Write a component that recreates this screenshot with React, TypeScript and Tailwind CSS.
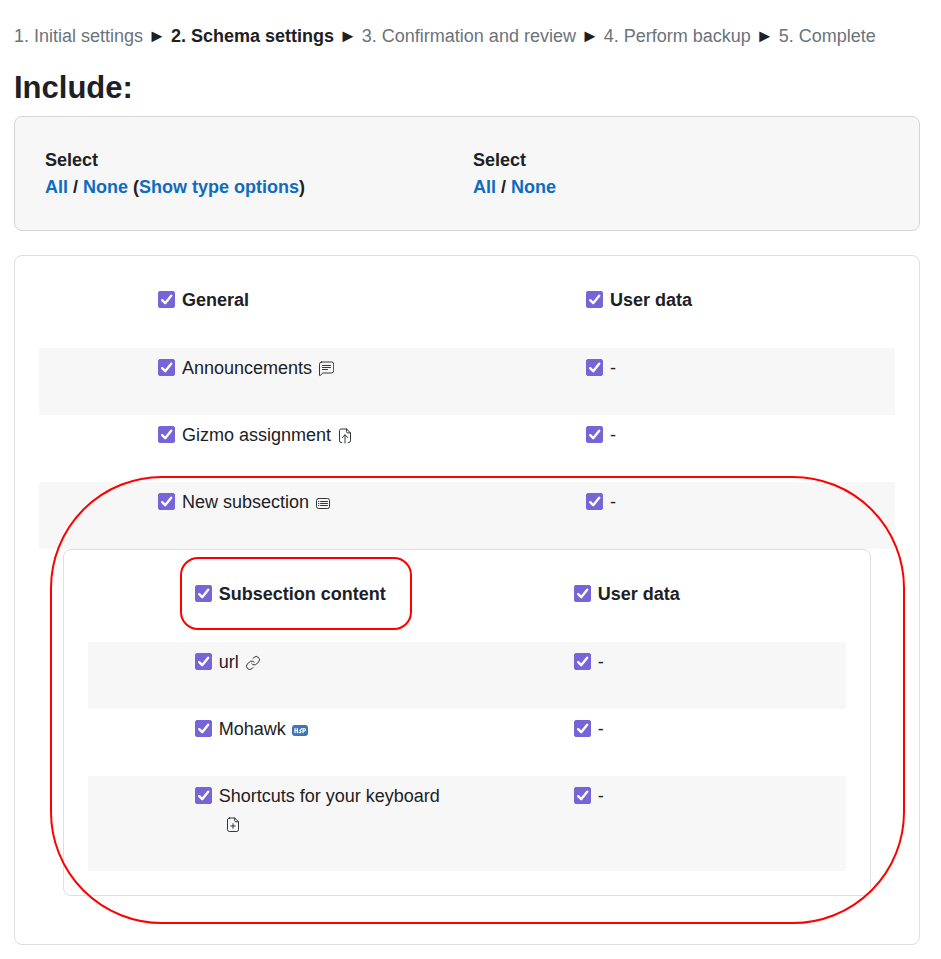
import { Fragment, type ReactNode } from 'react';

type IconName = 'forum' | 'assign' | 'subsection' | 'url' | 'h5p' | 'page';

type Activity = { id: string; name: string; icon: IconName };

const steps = [
  '1. Initial settings',
  '2. Schema settings',
  '3. Confirmation and review',
  '4. Perform backup',
  '5. Complete',
];
const currentStep = 1;

const generalActivities: Activity[] = [
  { id: 'announcements', name: 'Announcements', icon: 'forum' },
  { id: 'gizmo', name: 'Gizmo assignment', icon: 'assign' },
];

const subsectionActivities: Activity[] = [
  { id: 'url', name: 'url', icon: 'url' },
  { id: 'mohawk', name: 'Mohawk', icon: 'h5p' },
  { id: 'shortcuts', name: 'Shortcuts for your keyboard', icon: 'page' },
];

const iconShapes: Record<IconName, ReactNode> = {
  forum: (
    <>
      <path d="M3.700 1h9.800A2.200 2.200 0 0 1 15.700 3.200v6.600a2.200 2.200 0 0 1-2.200 2.200H4.800L2.200 14.600a.4.4 0 0 1-.7-.3V3.200A2.200 2.200 0 0 1 3.700 1Z" />
      <path d="M4.500 4.500h8M4.500 6.500h8M4.500 8.500h5" />
    </>
  ),
  assign: (
    <>
      <path d="M4.800 14.500H4.200A1.700 1.700 0 0 1 2.500 12.800V2.700A1.700 1.700 0 0 1 4.200 1h5.400l3.900 3.900v7.900a1.700 1.700 0 0 1-1.700 1.700h-.6" />
      <path d="M9.600 1v2.700a1.200 1.200 0 0 0 1.200 1.200h2.700M8 15V7M5.300 9.500 8 6.800l2.700 2.700" />
    </>
  ),
  subsection: (
    <>
      <rect x="1.500" y="3.500" width="13" height="10" rx="2" />
      <path d="M5.500 6.500h7M5.500 8.500h7M5.500 10.500h7M3.500 6.500h.4M3.500 8.500h.4M3.500 10.500h.4" />
    </>
  ),
  url: (
    <g transform="translate(.2 .2) scale(.65)" strokeWidth="1.400">
      <path d="M10 13a5 5 0 0 0 7.540.54l3-3a5 5 0 0 0-7.070-7.070l-1.720 1.710" />
      <path d="M14 11a5 5 0 0 0-7.540-.54l-3 3a5 5 0 0 0 7.070 7.070l1.710-1.710" />
    </g>
  ),
  h5p: (
    <>
      <rect x="0" y="3" width="16" height="11" rx="3" fill="#3a75b8" stroke="none" />
      <path
        d="M3 6.400v4.300M5.300 6.400v4.300M3 8.500h2.300M11 10.700V6.500h1.300a1.200 1.200 0 0 1 0 2.400H11M9.600 6.600 8 8.300M7 10a1 1 0 1 0 1.500-1.100"
        stroke="#fff"
        strokeWidth="1.200"
      />
    </>
  ),
  page: (
    <>
      <path d="M4.500 1h5.200l3.800 3.800v7.700a2 2 0 0 1-2 2h-7a2 2 0 0 1-2-2V3a2 2 0 0 1 2-2Z" />
      <path d="M9.700 1v2.600a1.200 1.200 0 0 0 1.200 1.200h2.600M8 6.700v4.600M5.700 9h4.600" />
    </>
  ),
};

function ActivityIcon({ name }: { name: IconName }) {
  return (
    <span className="inline-block pl-1.5 align-middle">
      <svg
        viewBox="0 0 16 16"
        className="block size-4 fill-none stroke-[#1d2125]"
        strokeWidth="0.9"
        strokeLinecap="round"
        strokeLinejoin="round"
        aria-hidden="true"
      >
        {iconShapes[name]}
      </svg>
    </span>
  );
}

function Check({ id, children }: { id: string; children: ReactNode }) {
  return (
    <div className="flex items-start gap-[7px]">
      <span className="grid h-[27px] shrink-0 items-center">
        <input
          id={id}
          type="checkbox"
          defaultChecked
          className="peer col-start-1 row-start-1 size-[17px] appearance-none rounded-[2px] border border-[#8f959e] bg-white checked:border-[#7765d8] checked:bg-[#7765d8]"
        />
        <svg
          viewBox="0 0 17 17"
          className="pointer-events-none invisible col-start-1 row-start-1 size-[17px] fill-none stroke-white stroke-[2.4] peer-checked:visible"
          strokeLinecap="round"
          strokeLinejoin="round"
          aria-hidden="true"
        >
          <path d="M4.200 9.200 7.200 12.200 13.200 4.800" />
        </svg>
      </span>
      <label htmlFor={id}>{children}</label>
    </div>
  );
}

function Row({ left, right, shaded }: { left: ReactNode; right: ReactNode; shaded?: boolean }) {
  return (
    <div className={shaded ? 'grid grid-cols-2 bg-[#f7f7f7]' : 'grid grid-cols-2'}>
      <div className="pt-1.5 pb-[33px] pl-[25%]">
        <div className="px-3">{left}</div>
      </div>
      <div className="pt-1.5 pb-[33px] pl-[25%]">
        <div className="px-3">{right}</div>
      </div>
    </div>
  );
}

function SectionHeader({ id, title, marked }: { id: string; title: string; marked?: boolean }) {
  return (
    <div className="pb-px font-bold">
      <Row
        left={
          <div className="relative w-fit">
            <Check id={id}>{title}</Check>
            {marked && (
              <div className="pointer-events-none absolute -top-[23px] -right-[26px] -bottom-[22px] -left-[15px] rounded-[18px] border-2 border-[#ff0000]" />
            )}
          </div>
        }
        right={<Check id={`${id}-userdata`}>User data</Check>}
      />
    </div>
  );
}

function ActivityRow({ activity, shaded }: { activity: Activity; shaded?: boolean }) {
  return (
    <Row
      shaded={shaded}
      left={
        <Check id={activity.id}>
          {activity.name}
          <ActivityIcon name={activity.icon} />
        </Check>
      }
      right={<Check id={`${activity.id}-userdata`}>-</Check>}
    />
  );
}

function TextLink({ children }: { children: ReactNode }) {
  return (
    <a href="#" className="text-[#0f6cbf] hover:underline">
      {children}
    </a>
  );
}

export default function App() {
  return (
    <main className="bg-white pt-[23px] pr-[21px] pb-3.5 pl-3.5 font-['Liberation_Sans',Arial,sans-serif] text-[18px] leading-[27px] text-[#1d2125]">
      <nav aria-label="Backup steps">
        {steps.map((step, i) => (
          <Fragment key={step}>
            {i > 0 && ' ► '}
            <span
              className={i === currentStep ? 'font-bold' : 'text-[#6a737b]'}
              aria-current={i === currentStep ? 'step' : undefined}
            >
              {step}
            </span>
          </Fragment>
        ))}
      </nav>

      <h2 className="mt-5 mb-2.5 text-[31px] leading-9 font-bold">Include:</h2>

      <section className="mb-6 rounded-lg border border-[#d5d5d5] bg-[#f7f7f7] p-6 font-bold">
        <div className="grid grid-cols-2 pt-1.5 pb-[5px]">
          <div className="px-1.5">
            <div>Select</div>
            <div>
              <TextLink>All</TextLink> / <TextLink>None</TextLink> (<TextLink>Show type options</TextLink>)
            </div>
          </div>
          <div className="px-1.5">
            <div>Select</div>
            <div>
              <TextLink>All</TextLink> / <TextLink>None</TextLink>
            </div>
          </div>
        </div>
      </section>

      <section className="rounded-lg border border-[#dedede] p-6 leading-7">
        <SectionHeader id="general" title="General" />
        {generalActivities.map((activity, i) => (
          <ActivityRow key={activity.id} activity={activity} shaded={i % 2 === 0} />
        ))}
        <div className="relative">
          <ActivityRow activity={{ id: 'subsection', name: 'New subsection', icon: 'subsection' }} shaded />
          <div className="px-6 pb-6">
            <section className="rounded-lg border border-[#dedede] p-6">
              <SectionHeader id="subsection-content" title="Subsection content" marked />
              {subsectionActivities.map((activity, i) => (
                <ActivityRow key={activity.id} activity={activity} shaded={i % 2 === 0} />
              ))}
            </section>
          </div>
          <div className="pointer-events-none absolute -top-1.5 -right-2.5 -bottom-1 left-[11px] rounded-[112px] border-2 border-[#ff0000]" />
        </div>
      </section>
    </main>
  );
}
